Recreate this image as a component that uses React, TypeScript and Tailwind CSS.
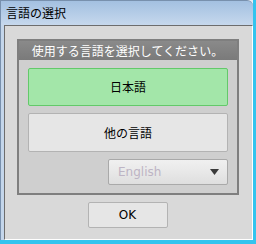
import React from "react";

const jp = { fontFamily: '"Noto Sans CJK JP", "Noto Sans", sans-serif' };
const latin = { fontFamily: 'Tahoma, "DejaVu Sans", "Liberation Sans", sans-serif' };

export default function App() {
  return (
    <div className="w-[256px] h-[244px] bg-[#e9eef5] border-r-[3px] border-b-[4px] border-[#34c4ee] flex flex-col overflow-hidden">
      {/* title bar */}
      <div className="h-[25px] shrink-0 bg-gradient-to-b from-[#a3c0e1] to-[#c6d8ed] border-l border-t border-[#7890ad] rounded-tr-[6px] flex items-center pl-[5px]">
        <span className="text-[12px] text-black leading-none" style={jp}>
          言語の選択
        </span>
      </div>

      {/* frame + client */}
      <div className="flex-1 flex bg-[#c4d6eb] border-l border-[#7890ad] pl-[3px]">
        <div className="flex-1 flex flex-col items-center bg-[#d9d9d9] border-l border-t border-[#6d6d6d] border-r border-b border-r-white border-b-white">
          {/* group panel */}
          <div className="mt-[13px] ml-[-2px] w-[222px] border-2 border-[#7f7f7f] bg-[#cfcfcf] flex flex-col">
            <div className="h-[19px] bg-gradient-to-b from-[#8a8a8a] to-[#7a7a7a] flex items-center justify-center">
              <span className="text-[12px] text-white leading-none" style={jp}>
                使用する言語を選択してください。
              </span>
            </div>
            <div className="flex flex-col items-center pt-[8px] pb-[8px] pl-[1px]">
              <button
                className="w-[200px] h-[38px] rounded-[2px] bg-[#a3e6a9] border border-[#63c96a] flex items-center justify-center text-[12px] text-black"
                style={jp}
              >
                日本語
              </button>
              <button
                className="mt-[7px] w-[200px] h-[39px] rounded-[2px] bg-[#e6e6e6] border border-[#b3b3b3] flex items-center justify-center text-[12px] text-black"
                style={jp}
              >
                他の言語
              </button>
              <div className="mt-[7px] w-[200px] flex justify-end">
                <div className="w-[120px] h-[26px] rounded-[2px] border border-[#a9a9a9] bg-gradient-to-b from-[#f0f0f0] via-[#e8e8e8] to-[#dedede] flex items-center justify-between pl-[9px] pr-[8px]">
                  <span className="text-[12px] text-[#bdb4c4]" style={latin}>
                    English
                  </span>
                  <svg width="9" height="6" viewBox="0 0 9 6">
                    <path d="M0 0 L9 0 L4.5 6 Z" fill="#3a3a3a" />
                  </svg>
                </div>
              </div>
            </div>
          </div>

          {/* OK button */}
          <button
            className="mt-[7px] ml-[-2px] w-[80px] h-[26px] rounded-[2px] bg-[#e6e6e6] border border-[#b3b3b3] flex items-center justify-center text-[12px] text-black"
            style={latin}
          >
            OK
          </button>
        </div>
      </div>
    </div>
  );
}
